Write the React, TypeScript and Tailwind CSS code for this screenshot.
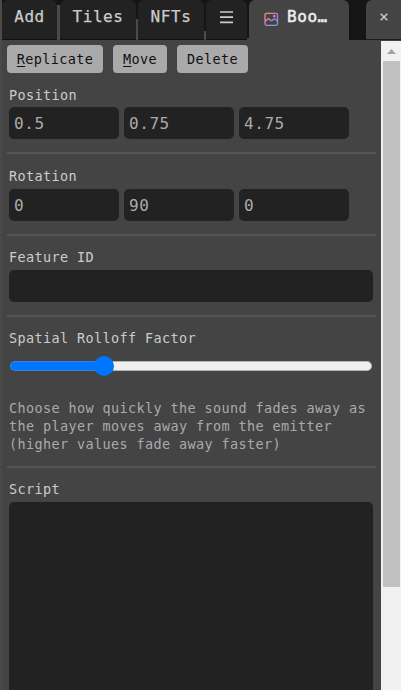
import type { ReactNode } from "react";

const mono = "font-['DejaVu_Sans_Mono','Liberation_Mono',monospace]";

function Tab({ className, children }: { className: string; children: ReactNode }) {
  return (
    <div className={`flex h-10 shrink-0 items-start justify-center rounded-t-[6px] border-b border-[#111] bg-[#222] pt-[5px] text-[16px] leading-6 tracking-[0.57px] text-[#ccc] [-webkit-text-stroke:0.25px_#ccc] ${className}`}>
      {children}
    </div>
  );
}

function Action({ className, children }: { className: string; children: ReactNode }) {
  return (
    <button className={`h-7 rounded-[4px] bg-[#aaa] pt-[1px] text-center text-[13.5px] leading-[27px] tracking-[0.37px] text-[#111] ${className}`}>
      {children}
    </button>
  );
}

function Label({ children }: { children: ReactNode }) {
  return <div className="h-[19px] text-[13.5px] leading-[19px] tracking-[0.37px] whitespace-pre text-[#ccc]">{children}</div>;
}

function Field({ value }: { value: string }) {
  return (
    <div className="h-8 w-[110px] rounded-[5px] bg-[#222] px-[5px] pt-[1px] text-[16px] leading-8 tracking-[0.57px] text-[#aaa]">{value}</div>
  );
}

function Vector({ label, values, gap }: { label: string; values: string[]; gap: string }) {
  return (
    <>
      <Label>{label}</Label>
      <div className={`flex gap-[5px] ${gap}`}>
        {values.map((v, i) => (
          <Field key={i} value={v} />
        ))}
      </div>
    </>
  );
}

function Rule({ className }: { className: string }) {
  return <div className={`-mr-[3px] -ml-[2px] h-[2px] bg-[#555] ${className}`} />;
}

export default function App() {
  return (
    <div className={`flex h-[690px] w-[401px] flex-col overflow-hidden bg-[#444] ${mono}`}>
      <div className="flex h-10 shrink-0 bg-[#151515]">
        <div className="w-[2px] bg-[#4a4a4a]" />
        <Tab className="w-[55px]">Add</Tab>
        <div className="mt-[5px] w-[3px] bg-[#4a4a4a]" />
        <Tab className="w-[76px]">Tiles</Tab>
        <div className="mt-[19px] w-[2px] bg-[#4a4a4a]" />
        <Tab className="w-[66px]">NFTs</Tab>
        <div className="mt-[31px] w-[2px] bg-[#4a4a4a]" />
        <Tab className="w-[41px]">
          <svg className="mt-[6px]" width="13" height="13" viewBox="0 0 13 13" fill="none" stroke="#ccc" strokeWidth="1.7">
            <path d="M0 1h13M0 6.2h13M0 11.4h13" />
          </svg>
        </Tab>
        <div className="mt-[38px] w-[2px] bg-[#444]" />
        <div className="flex h-10 w-[100px] shrink-0 rounded-t-[6px] bg-[#444] pt-[5px] pl-[15px]">
          <svg className="mt-[7px]" width="15" height="15" viewBox="0 0 15 15" fill="none" stroke="url(#photo)" strokeWidth="1.3" strokeLinejoin="round">
            <defs>
              <linearGradient id="photo" x1="1" y1="1" x2="14" y2="14" gradientUnits="userSpaceOnUse">
                <stop stopColor="#e99b60" />
                <stop offset=".5" stopColor="#c779cf" />
                <stop offset="1" stopColor="#55afe8" />
              </linearGradient>
            </defs>
            <rect x="1" y="1.3" width="12.5" height="12" rx="1.5" />
            <path d="M1.2 9.6 3.4 7.2Q4.4 6.2 5.4 7.2L6.5 8.3Q7.4 9 8.3 8.2L9.5 7.2Q10.4 6.5 11.3 7.2L13.3 8.8" />
            <circle cx="10.3" cy="4.2" r=".7" />
          </svg>
          <div className="ml-2 text-[16px] leading-6 tracking-[0.57px] text-[#eee] [-webkit-text-stroke:0.5px_#eee]">Boo…</div>
        </div>
        <div className="ml-[17px] flex h-10 w-[35px] items-center justify-center rounded-tl-[6px] border-b border-[#1b1b1b] bg-[#444] pb-[6px]">
          <svg width="8" height="8" viewBox="0 0 8 8" stroke="#ccc" strokeWidth="1.5">
            <path d="M.7.7l6.6 6.6M7.3.7.7 7.3" />
          </svg>
        </div>
      </div>

      <div className="flex min-h-0 flex-1">
        <div className="w-[2px] shrink-0 bg-[#4a4a4a]" />
        <main className="w-[379px] overflow-hidden pr-2 pl-[7px]">
          <div className="-ml-[2px] flex pt-[5px]">
            <Action className="w-24">
              <u className="decoration-1 underline-offset-2">R</u>eplicate
            </Action>
            <Action className="ml-[10px] w-[54px]">
              <u className="decoration-1 underline-offset-2">M</u>ove
            </Action>
            <Action className="ml-[10px] w-[71px]">Delete</Action>
          </div>
          <div className="h-[13px]" />
          <Vector label="Position" values={["0.5", "0.75", "4.75"]} gap="mt-[2px]" />
          <Rule className="mt-[13px] mb-[13px]" />
          <Vector label="Rotation" values={["0", "90", "0"]} gap="mt-[3px]" />
          <Rule className="mt-[13px] mb-[12px]" />
          <Label>Feature ID</Label>
          <div className="mt-[3px] h-8 w-[364px] rounded-[5px] bg-[#222]" />
          <Rule className="mt-[13px] mb-[12px]" />
          <Label>Spatial Rolloff Factor</Label>
          <div className="mt-[8px] flex h-5 items-center">
            <div className="ml-[1px] h-[10px] w-[90px] rounded-l-[5px] border border-r-0 border-[#3b83da] bg-[#0075ff]" />
            <div className="relative z-10 -mx-[6px] size-5 shrink-0 rounded-full bg-[#0075ff]" />
            <div className="h-[10px] w-[264px] rounded-r-[5px] border border-l-0 border-[#b2b2b2] bg-[#efefef]" />
          </div>
          <p className="mt-[23px] text-[13.5px] leading-[18px] tracking-[0.37px] whitespace-pre text-[#aaa]">
            {"Choose how quickly the sound fades away as\nthe player moves away from the emitter\n(higher values fade away faster)"}
          </p>
          <Rule className="mt-[13px] mb-[12px]" />
          <Label>Script</Label>
          <div className="mt-[3px] h-[210px] w-[364px] rounded-[5px] bg-[#222]" />
        </main>
        <aside className="mt-[1px] w-5 shrink-0 bg-[#f1f1f1] pl-[2px]">
          <div className="flex h-5 items-center justify-center pr-[1px]">
            <svg width="9" height="5" viewBox="0 0 9 5" fill="#a3a3a3">
              <path d="M0 5 4.5 0 9 5z" />
            </svg>
          </div>
          <div className="h-[526px] w-[17px] bg-[#c1c1c1]" />
        </aside>
      </div>
    </div>
  );
}
